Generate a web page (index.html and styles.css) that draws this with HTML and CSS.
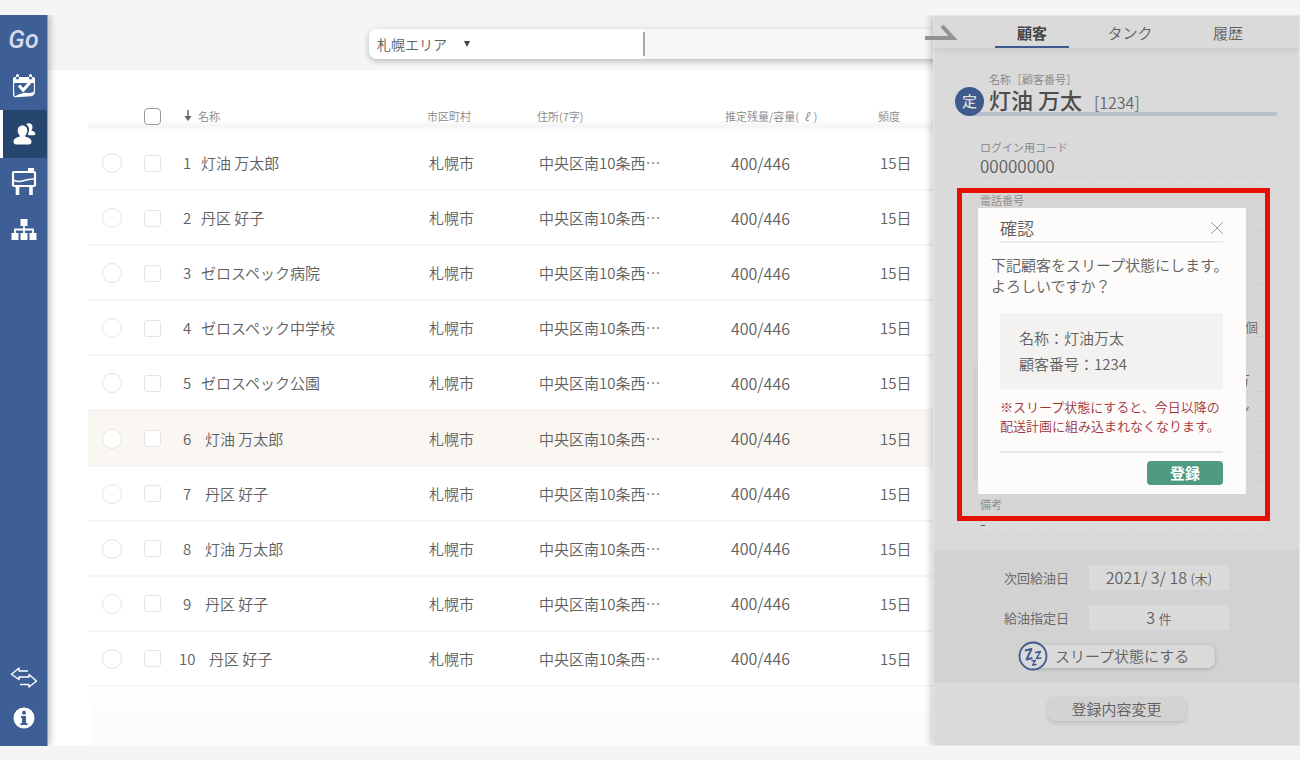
FILE: index.html
```html
<!DOCTYPE html>
<html lang="ja">
<head>
<meta charset="utf-8">
<meta name="viewport" content="width=device-width, initial-scale=1">
<title>顧客一覧</title>
<link rel="stylesheet" href="styles.css">
</head>
<body>
<div class="app">
  <nav class="sidebar">
    <a class="logo" href="#">Go</a>
    <a class="nav-item" href="#" aria-label="予定">
      <svg width="24" height="24" viewBox="0 0 24 24"><path fill="#fff" d="M1 4.500Q1 3 2.500 3H4V1.500a1.500 1.500 0 0 1 3 0V3h10V1.500a1.500 1.500 0 0 1 3 0V3h1.500Q23 3 23 4.500V9H1z"/><circle cx="5.500" cy="4" r="1.500" fill="#3e5e96"/><circle cx="18.500" cy="4" r="1.500" fill="#3e5e96"/><path fill="none" stroke="#fff" stroke-width="1.300" d="M1.700 8v12.500Q1.700 22.800 4 22.600L19 21.500Q22.300 21 22.300 18V8"/><path fill="#3e5e96" d="M2.400 9h19.200v9H2.400z"/><path fill="#fff" d="M3 22.500q7-4.500 13-3.500 4 .5 6-2-1 4-4 4.500z"/><path fill="none" stroke="#fff" stroke-width="3.200" d="M7 11.500l4.200 4.700 6.800-7.700"/></svg>
    </a>
    <a class="nav-item nav-item--active" href="#" aria-label="顧客" aria-current="page">
      <svg width="24" height="24" viewBox="0 0 24 24"><path fill="#fff" d="M14 2.200c3-2 6.500-.7 6.500 2.800 0 1.700-.6 2.700-1.200 3.500 2.200.6 4 1.500 4 3.500 0 1-1 1.300-2 1.300h-4.500c-1-.8-1-1.600-.5-2.400C17.800 8 17.500 4.300 14 2.200z"/><path fill="#fff" d="M10.500 3.500c3 0 5 2.300 4.800 5.200-.1 2.300-1.300 3.800-2 4.800v1.300c3 .7 6.200 1.700 6.200 5 0 2-1 2.700-3 2.700h-12c-2 0-3-.7-3-2.700 0-3.300 3.200-4.300 6.200-5v-1.300c-.7-1-1.900-2.500-2-4.800-.2-2.900 1.800-5.200 4.800-5.200z"/></svg>
    </a>
    <a class="nav-item" href="#" aria-label="タンク">
      <svg width="26" height="28" viewBox="0 0 26 28"><g fill="none" stroke="#fff"><rect x="2" y="4" width="22" height="14" rx="1" stroke-width="2.200"/><path stroke-width="1.500" d="M2 12q5 2.500 11 .5T24 11"/><path stroke-width="3.600" d="M6.500 18v9M20 18v9"/></g><path fill="#fff" d="M17 0h6v4h-6z"/></svg>
    </a>
    <a class="nav-item" href="#" aria-label="組織">
      <svg width="26" height="22" viewBox="0 0 26 22"><path fill="#fff" d="M9.500 0h7v7h-7zM.5 14h7v7h-7zM9.500 14h7v7h-7zM18.500 14h7v7h-7z"/><path fill="none" stroke="#fff" stroke-width="1.800" d="M13 6v9M4 15v-4.500h18V15"/></svg>
    </a>
    <div class="nav-bottom">
      <a class="nav-item nav-item--small" href="#" aria-label="切替">
        <svg width="28" height="24" viewBox="0 0 28 24" fill="none" stroke="#fff" stroke-width="1.400" stroke-linejoin="round"><path d="M18 5H9V2L1.500 8.200 9 13.500V11h10V8.500l7.500 6.500-7.500 6v-2.500h-9"/></svg>
      </a>
      <a class="nav-item nav-item--small" href="#" aria-label="情報">
        <svg width="22" height="22" viewBox="0 0 22 22"><circle cx="11" cy="11" r="10.500" fill="#fff"/><circle cx="11" cy="5.700" r="2" fill="#3e5e96"/><path fill="#3e5e96" d="M8 9h5v7h1.500v2h-7v-2H9v-5H8z"/></svg>
      </a>
    </div>
  </nav>

  <main class="main">
    <header class="topbar">
      <form class="search">
        <div class="area">
          <select class="area-select" aria-label="エリア"><option>札幌エリア</option></select>
          <svg class="area-arrow" width="8" height="6" viewBox="0 0 8 6"><path fill="#444" d="M1 0h6L4 6z"/></svg>
        </div>
        <input class="search-input" type="text" aria-label="検索">
      </form>
    </header>

    <section class="list">
      <table class="customers">
        <colgroup><col class="col-radio"><col class="col-check"><col class="col-name"><col class="col-city"><col class="col-address"><col class="col-stock"><col></colgroup>
        <thead>
          <tr>
            <th></th>
            <th><input class="check check--all" type="checkbox" aria-label="すべて選択"></th>
            <th><button class="sort" type="button"><svg width="8" height="12" viewBox="0 0 8 12"><path fill="none" stroke="#666" stroke-width="1.500" d="M4 0v8"/><path fill="#666" d="M.3 6h7.400L4 11z"/></svg>名称</button></th>
            <th>市区町村</th><th>住所(7字)</th><th>推定残量/容量(<i class="litre">ℓ</i>)</th><th>頻度</th>
          </tr>
        </thead>
        <tbody>
          <tr><td><input class="radio" type="radio" name="row" aria-label="1"></td><td><input class="check" type="checkbox" aria-label="1"></td><td><span class="no">1</span>灯油 万太郎</td><td>札幌市</td><td>中央区南10条西⋯</td><td class="stock">400/446</td><td>15日</td></tr>
          <tr><td><input class="radio" type="radio" name="row" aria-label="2"></td><td><input class="check" type="checkbox" aria-label="2"></td><td><span class="no">2</span>丹区 好子</td><td>札幌市</td><td>中央区南10条西⋯</td><td class="stock">400/446</td><td>15日</td></tr>
          <tr><td><input class="radio" type="radio" name="row" aria-label="3"></td><td><input class="check" type="checkbox" aria-label="3"></td><td><span class="no">3</span>ゼロスペック病院</td><td>札幌市</td><td>中央区南10条西⋯</td><td class="stock">400/446</td><td>15日</td></tr>
          <tr><td><input class="radio" type="radio" name="row" aria-label="4"></td><td><input class="check" type="checkbox" aria-label="4"></td><td><span class="no">4</span>ゼロスペック中学校</td><td>札幌市</td><td>中央区南10条西⋯</td><td class="stock">400/446</td><td>15日</td></tr>
          <tr><td><input class="radio" type="radio" name="row" aria-label="5"></td><td><input class="check" type="checkbox" aria-label="5"></td><td><span class="no">5</span>ゼロスペック公園</td><td>札幌市</td><td>中央区南10条西⋯</td><td class="stock">400/446</td><td>15日</td></tr>
          <tr class="selected"><td><input class="radio" type="radio" name="row" aria-label="6"></td><td><input class="check" type="checkbox" aria-label="6"></td><td><span class="no no--wide">6</span>灯油 万太郎</td><td>札幌市</td><td>中央区南10条西⋯</td><td class="stock">400/446</td><td>15日</td></tr>
          <tr><td><input class="radio" type="radio" name="row" aria-label="7"></td><td><input class="check" type="checkbox" aria-label="7"></td><td><span class="no no--wide">7</span>丹区 好子</td><td>札幌市</td><td>中央区南10条西⋯</td><td class="stock">400/446</td><td>15日</td></tr>
          <tr><td><input class="radio" type="radio" name="row" aria-label="8"></td><td><input class="check" type="checkbox" aria-label="8"></td><td><span class="no no--wide">8</span>灯油 万太郎</td><td>札幌市</td><td>中央区南10条西⋯</td><td class="stock">400/446</td><td>15日</td></tr>
          <tr><td><input class="radio" type="radio" name="row" aria-label="9"></td><td><input class="check" type="checkbox" aria-label="9"></td><td><span class="no no--wide">9</span>丹区 好子</td><td>札幌市</td><td>中央区南10条西⋯</td><td class="stock">400/446</td><td>15日</td></tr>
          <tr><td><input class="radio" type="radio" name="row" aria-label="10"></td><td><input class="check" type="checkbox" aria-label="10"></td><td><span class="no no--double">10</span>丹区 好子</td><td>札幌市</td><td>中央区南10条西⋯</td><td class="stock">400/446</td><td>15日</td></tr>
        </tbody>
      </table>
      <div class="list-end"></div>
    </section>
  </main>

  <aside class="drawer">
    <button class="drawer-close" type="button" aria-label="閉じる"><svg width="34" height="16" viewBox="0 0 34 16"><path fill="none" stroke="#929292" stroke-width="4" d="M0 14h28L17 2"/></svg></button>
    <nav class="tabs">
      <button class="tab tab--active" type="button">顧客</button>
      <button class="tab" type="button">タンク</button>
      <button class="tab" type="button">履歴</button>
    </nav>

    <div class="detail">
      <div class="heading">
        <span class="badge">定</span>
        <div class="heading-text">
          <div class="label">名称［顧客番号］</div>
          <h1 class="name">灯油 万太<span class="code">[1234]</span></h1>
        </div>
      </div>
      <div class="field field--first"><div class="label">ログイン用コード</div><div class="value">00000000</div></div>
      <div class="field"><div class="label">電話番号</div><div class="value"></div></div>
      <div class="field"><div class="label"></div><div class="value"></div></div>
      <div class="field"><div class="label"></div><div class="value value--unit">個</div></div>
      <div class="group">
        <div class="group-row">方</div>
        <div class="group-row">ン</div>
        <div class="group-row"></div>
        <div class="group-row"></div>
      </div>
      <div class="field"><div class="label">備考</div><div class="value">-</div></div>
    </div>

    <div class="schedule">
      <dl class="dates">
        <dt>次回給油日</dt><dd>2021/ 3/ 18 <small>(木)</small></dd>
        <dt>給油指定日</dt><dd>3 <small>件</small></dd>
      </dl>
      <button class="sleep" type="button">
        <svg class="sleep-icon" width="30" height="30" viewBox="0 0 30 30"><circle cx="15" cy="15" r="13.500" fill="#dadada" stroke="#3f5a8c" stroke-width="1.800"/><g fill="none" stroke="#3f5a8c" stroke-linejoin="round"><path stroke-width="1.900" d="M7 9.500l6.500-1.500L8.500 18.500l6-1.500"/><path stroke-width="1.500" d="M17 11.500l5.500-1-4 7 5-.5"/><path stroke-width="1.300" d="M13.500 20l4-.5-3 4.500 4-.5"/></g></svg>
        <span class="sleep-text">スリープ状態にする</span>
      </button>
    </div>
    <div class="drawer-foot"><button class="edit" type="button">登録内容変更</button></div>

    <div class="highlight">
      <div class="dialog" role="dialog" aria-labelledby="dialog-title">
        <div class="dialog-head">
          <h2 class="dialog-title" id="dialog-title">確認</h2>
          <button class="dialog-close" type="button" aria-label="閉じる"><svg width="12" height="12" viewBox="0 0 12 12"><path stroke="#999" d="M0 0l12 12M12 0L0 12"/></svg></button>
        </div>
        <p class="message">下記顧客をスリープ状態にします。<br>よろしいですか？</p>
        <div class="target">名称：灯油万太<br>顧客番号：1234</div>
        <p class="warning">※スリープ状態にすると、今日以降の<br>配送計画に組み込まれなくなります。</p>
        <div class="dialog-foot"><button class="submit" type="button">登録</button></div>
      </div>
    </div>
  </aside>
</div>
</body>
</html>
```
FILE: styles.css
```css
* { box-sizing: border-box; }
body {
  margin: 0;
  background: #f5f5f5;
  color: #606060;
  font: 350 15px/20px "Noto Sans CJK JP", sans-serif;
}
button, input, select { font: inherit; color: inherit; border: 0; padding: 0; margin: 0; background: none; }
h1, h2, p, dl, dd { margin: 0; font-weight: inherit; }
svg { display: block; flex: none; }

.app { display: flex; min-height: 100vh; padding: 15px 0 14px; overflow: hidden; }

/* Sidebar */
.sidebar {
  position: relative;
  z-index: 1;
  flex: none;
  display: flex;
  flex-direction: column;
  width: 48px;
  background: #3e5e96;
  border-right: 1px solid #8c9cba;
  box-shadow: 3px 0 6px rgba(0, 0, 0, .2);
  clip-path: inset(0 -8px 0 0);
}
.logo {
  display: flex;
  align-items: center;
  justify-content: center;
  height: 47px;
  padding-top: 2px;
  color: #d3dbea;
  font: italic 500 25px/28px Roboto, sans-serif;
  text-decoration: none;
}
.nav-item { display: flex; align-items: center; justify-content: center; height: 48px; }
.nav-item--active { background: #26466f; border-left: 3px solid #fff; padding-right: 3px; }
.nav-item--small { height: 40px; }
.nav-bottom { margin-top: auto; padding-bottom: 8px; }

/* Main column */
.main { flex: 1; min-width: 0; display: flex; flex-direction: column; overflow: hidden; background: #fff; }
.topbar { height: 55px; padding: 14px 0 0 321px; background: #f5f5f5; }
.search {
  display: flex;
  align-items: center;
  height: 30px;
  margin-right: -20px;
  border-radius: 8px;
  background: #f6f6f6;
  box-shadow: 0 2px 6px rgba(0, 0, 0, .25);
}
.area {
  display: flex;
  align-items: center;
  gap: 16px;
  width: 274px;
  height: 30px;
  padding-left: 8px;
  border-radius: 8px 0 0 8px;
  background: #fff;
}
.area-select { appearance: none; width: 70px; height: 20px; font-size: 14px; }
.search-input { flex: 1; min-width: 0; height: 24px; border-left: 2px solid #aaa; }

.list { flex: 1; display: flex; flex-direction: column; padding: 30px 0 0 40px; }
.customers { width: 100%; height: 587px; table-layout: fixed; border-collapse: separate; border-spacing: 0; }
.col-radio { width: 44px; }
.col-check { width: 47px; }
.col-name { width: 247px; }
.col-city { width: 110px; }
.col-address { width: 188px; }
.col-stock { width: 153px; }
.customers th {
  height: 36px;
  padding: 0 0 4px 1px;
  color: #888;
  font-size: 11px;
  font-weight: 350;
  text-align: left;
  white-space: nowrap;
  background: linear-gradient(#fff 20px, #f5f5f5 26px, #fff 33px);
}
.customers td { padding: 1px 0 0 3px; border-bottom: 2px solid #f5f5f5; white-space: nowrap; }
.customers td:nth-child(1) { padding-left: 14px; }
.customers td:nth-child(2), .customers th:nth-child(2) { padding-left: 12px; }
.customers td:nth-child(3) { padding-left: 0; }
.customers .stock { padding: 0 0 0 7px; font-size: 16px; }
.selected td { background: #faf7f3; }
.sort { display: flex; align-items: center; gap: 6px; padding-left: 4px; }
.litre { margin: 0 5px; }
.no { display: inline-block; width: 16px; margin-right: 6px; text-align: center; }
.no--wide { margin-right: 10px; }
.no--double { margin-right: 14px; }
.radio, .check { appearance: none; display: block; background: #fff; border: 1px solid #e4e4e4; }
.radio { width: 20px; height: 20px; border-radius: 50%; }
.check { width: 17px; height: 17px; border-radius: 3px; }
.check--all { border-color: #999; border-radius: 4px; }
.list-end { flex: 1; margin-left: 3px; background: linear-gradient(#fff, #fcfcfc 30px); }

/* Customer drawer */
.drawer {
  position: relative;
  z-index: 2;
  flex: none;
  display: flex;
  flex-direction: column;
  width: 367px;
  border: 1px solid #e6e6e6;
  background: #dadada;
  box-shadow: -3px 0 6px rgba(0, 0, 0, .18);
  clip-path: inset(0 0 0 -10px);
}
.drawer-close { position: absolute; top: 8px; left: -9px; }
.tabs { display: flex; gap: 24px; height: 32px; padding: 0 34px 0 61px; box-shadow: 0 3px 5px rgba(0, 0, 0, .07); }
.tab { flex: 1; height: 32px; padding-top: 4px; border-bottom: 2px solid transparent; }
.tab--active { border-color: #3f5a8c; color: #444; font-weight: 700; }
.detail { flex: 1; padding: 23px 35px 12px 46px; }
.heading { display: flex; align-items: flex-end; margin: 0 -13px 0 -25px; }
.badge {
  z-index: 1;
  flex: none;
  width: 29px;
  height: 29px;
  border-radius: 50%;
  background: #3f5a8c;
  color: #dadada;
  font-weight: 500;
  line-height: 27px;
  text-align: center;
}
.heading-text { flex: 1; margin-left: -12px; padding-left: 17px; border-bottom: 4px solid #b9c0cb; }
.label { height: 16px; color: #848484; font-size: 11px; line-height: 16px; }
.name { display: flex; align-items: baseline; gap: 12px; height: 25px; color: #4c4c4c; font-size: 22px; font-weight: 500; line-height: 25px; white-space: nowrap; }
.code { color: #666; font-size: 16px; font-weight: 350; }
.field { margin-top: 14px; border-bottom: 1px dashed #cfcfcf; }
.field--first { margin-top: 23px; }
.value { height: 22px; font-size: 17px; line-height: 22px; }
.value--unit { padding-right: 6px; font-size: 13px; line-height: 26px; text-align: right; }
.group { width: 273px; margin: 25px 0 0 -7px; background: #d4d3d1; }
.group-row { height: 30px; margin-left: 7px; margin-right: -18px; padding-right: 14px; border-bottom: 1px dashed #cfcfcf; line-height: 34px; text-align: right; }

.schedule { padding: 15px 0 12px; background: #d2d2d2; }
.dates { display: grid; grid-template-columns: auto 140px; gap: 15px 20px; justify-content: center; font-size: 13px; line-height: 25px; }
.dates dd { height: 25px; background: #dadada; font-size: 16px; line-height: 24px; text-align: center; }
.dates small { font-size: 13px; }
.sleep { display: flex; align-items: center; width: 197px; margin: 11px auto 0; }
.sleep-icon { z-index: 1; }
.sleep-text {
  flex: 1;
  height: 23px;
  margin-left: -15px;
  padding-left: 22px;
  border-radius: 8px;
  background: #dadada;
  box-shadow: 0 1px 4px rgba(0, 0, 0, .2);
  line-height: 22px;
  text-align: left;
}
.drawer-foot { display: flex; justify-content: center; padding: 14px 0 24px; }
.edit { width: 138px; height: 24px; border-radius: 7px; background: #d3d3d3; box-shadow: 0 2px 4px rgba(0, 0, 0, .14); }

/* Confirmation dialog with its highlight frame */
.highlight {
  position: absolute;
  z-index: 3;
  top: 172px;
  right: 29px;
  padding: 15px 19px 22px 16px;
  border: 5px solid #e61002;
  background: rgba(200, 190, 170, .1);
}
.dialog { width: 268px; padding: 9px 23px 9px 22px; background: #fdfcfa; }
.dialog-head { display: flex; align-items: center; justify-content: space-between; height: 26px; padding-bottom: 2px; border-bottom: 2px solid #ececeb; }
.dialog-title { font-size: 17px; }
.message { margin: 11px -9px 0; line-height: 21px; white-space: nowrap; }
.target { margin-top: 17px; padding: 12px 19px; background: #f3f2f0; line-height: 26px; }
.warning { margin-top: 8px; color: #a03038; font-size: 13px; line-height: 19px; white-space: nowrap; }
.dialog-foot { display: flex; justify-content: flex-end; margin-top: 16px; padding-top: 8px; border-top: 2px solid #e8e8e7; }
.submit { width: 76px; height: 24px; border-radius: 4px; background: #519a82; color: #fff; font-weight: 700; }
```
